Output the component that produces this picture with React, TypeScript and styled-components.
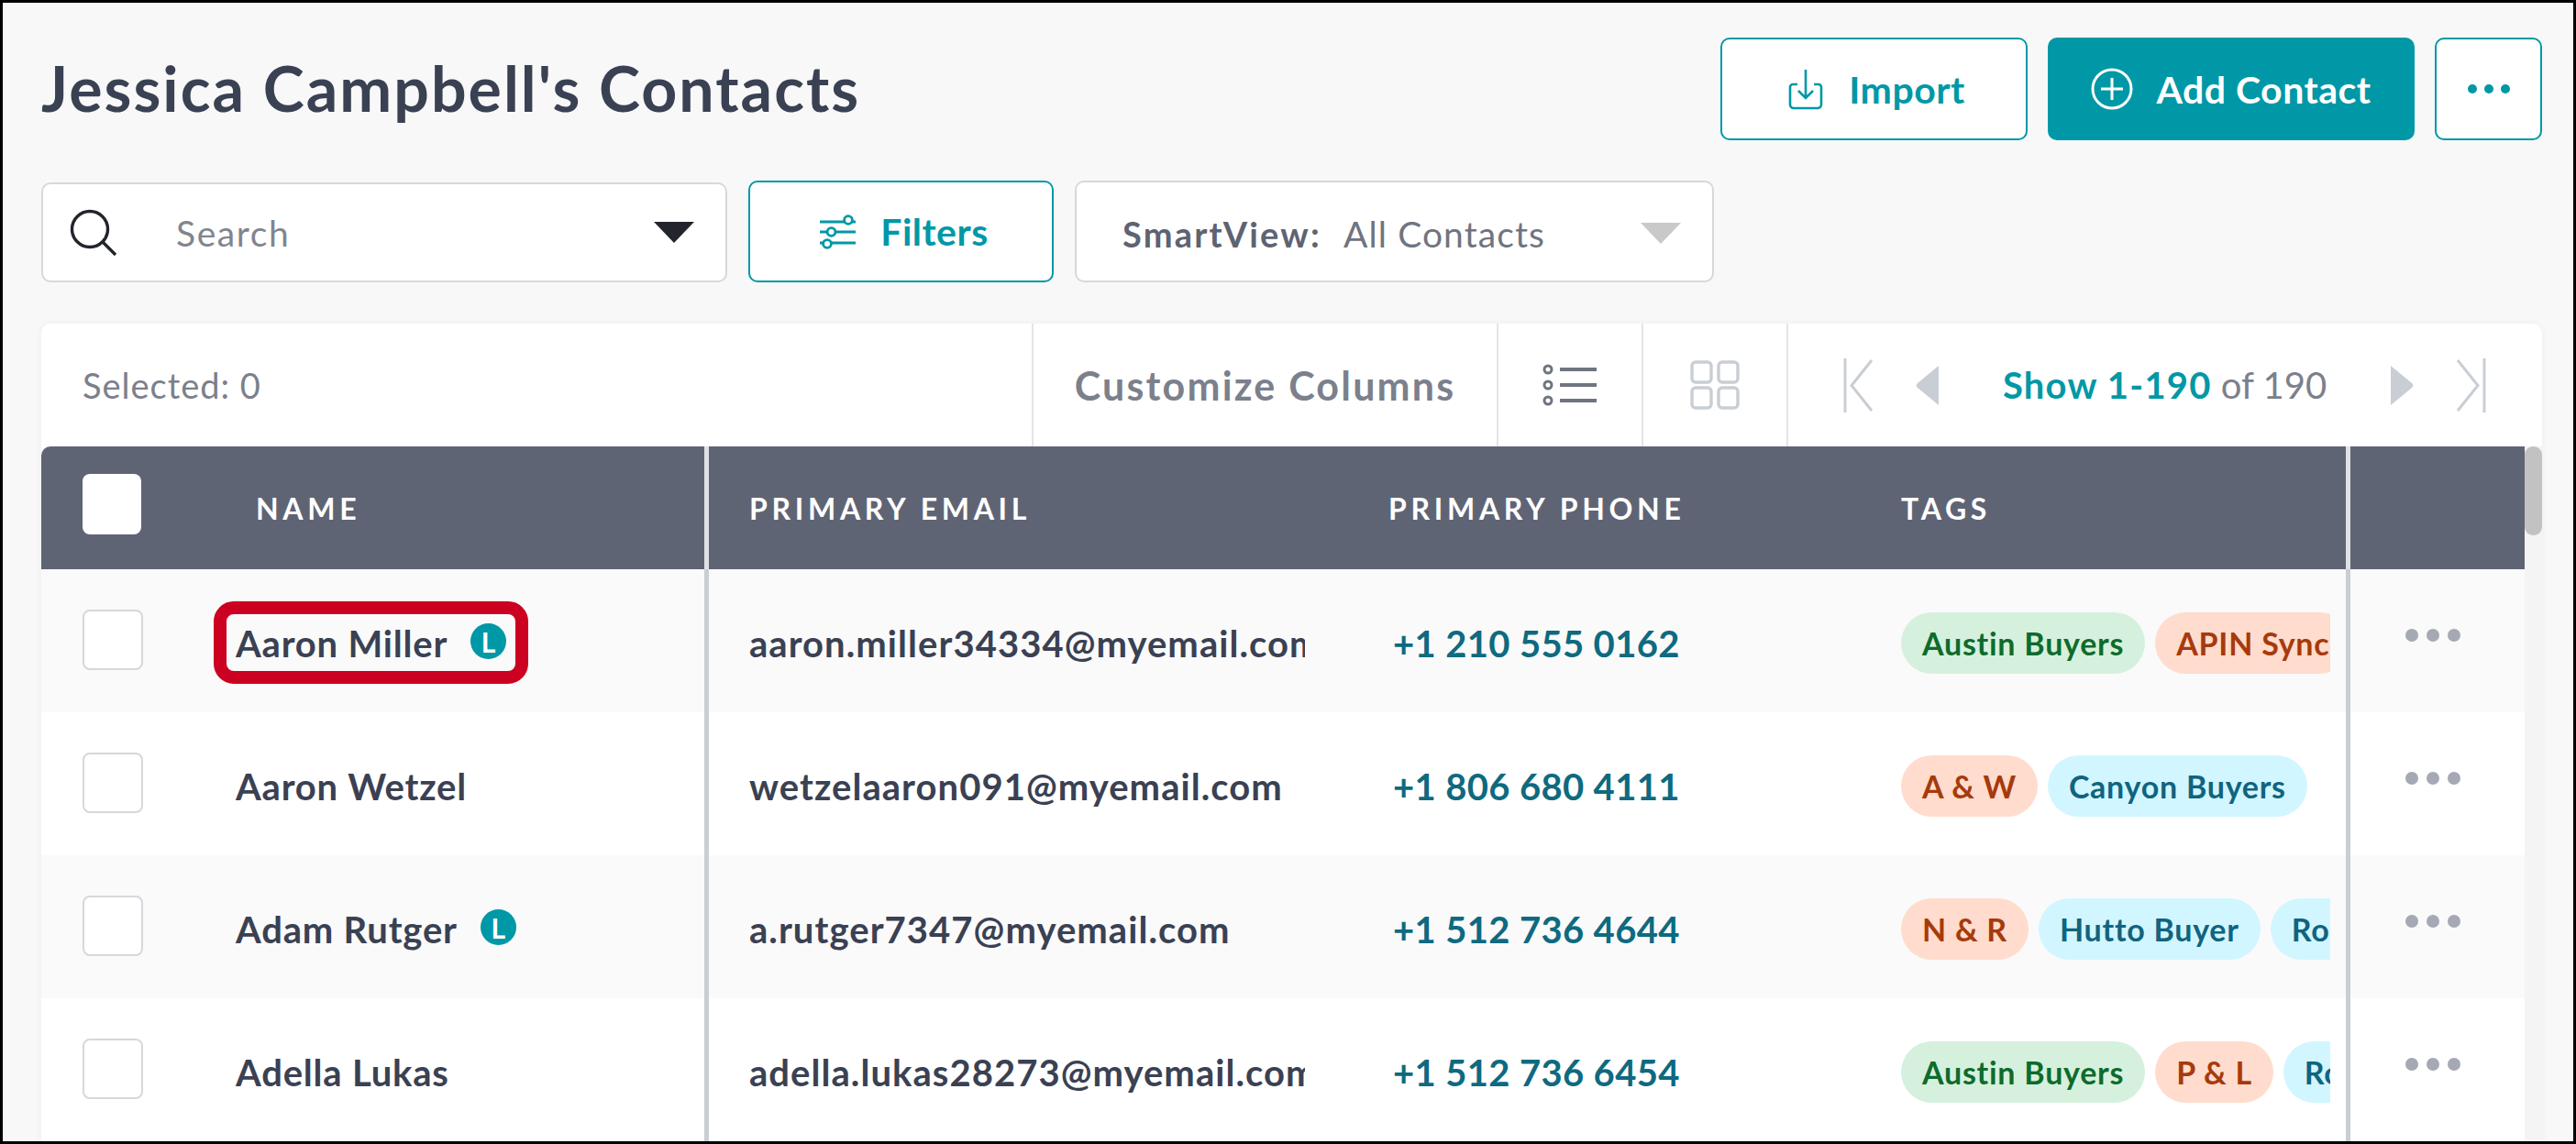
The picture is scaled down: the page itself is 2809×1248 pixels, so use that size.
import React from 'react';
import styled, { createGlobalStyle } from 'styled-components';

const Colors = {
  teal: '#0098a6',
  ink: '#3a4153',
  slate: '#5f6475',
  line: '#c9ced5',
  hair: '#e3e5e8',
  grey: '#7b808c',
};

const GlobalStyle = createGlobalStyle`
  html, body {
    margin: 0;
    padding: 0;
    background: #f8f8f8;
  }
  * {
    box-sizing: border-box;
  }
  body {
    font-family: Lato, "Open Sans", sans-serif;
  }
`;

const Page = styled.div`
  width: 2809px;
  height: 1248px;
  border: 3px solid #000;
  padding: 0 34px 0 42px;
  background: #f8f8f8;
  overflow: hidden;
  display: flex;
  flex-direction: column;
`;

const TopBar = styled.div`
  display: flex;
  align-items: center;
  justify-content: space-between;
  margin-top: 38px;
  height: 112px;
`;

const Title = styled.h1`
  margin: 0 0 4px;
  font-size: 68px;
  font-weight: 700;
  letter-spacing: 2.05px;
  color: ${Colors.ink};
`;

const TopActions = styled.div`
  display: flex;
  gap: 22px;
`;

const OutlineButton = styled.div<{ $width: number; $height?: number; $shift?: number; $gap?: number }>`
  width: ${(p) => p.$width}px;
  height: ${(p) => p.$height || 112}px;
  display: flex;
  align-items: center;
  justify-content: center;
  gap: ${(p) => p.$gap || 28}px;
  padding-left: ${(p) => p.$shift || 0}px;
  background: #fff;
  border: 2px solid ${Colors.teal};
  border-radius: 10px;
  color: ${Colors.teal};
  font-size: 41px;
  font-weight: 700;
  letter-spacing: 0.5px;
`;

const SolidButton = styled(OutlineButton)`
  background: ${Colors.teal};
  color: #fff;
`;

const MoreDots = styled.div`
  display: flex;
  gap: 8px;
`;

const Dot = styled.span<{ $size: number; $color: string }>`
  width: ${(p) => p.$size}px;
  height: ${(p) => p.$size}px;
  border-radius: 50%;
  background: ${(p) => p.$color};
`;

const FilterBar = styled.div`
  display: flex;
  align-items: flex-end;
  gap: 23px;
  margin-top: 44px;
  height: 111px;
`;

const SearchBox = styled.div`
  width: 748px;
  height: 109px;
  display: flex;
  align-items: center;
  padding: 0 34px 0 29px;
  background: #fff;
  border: 2px solid #d5d8dc;
  border-radius: 10px;
`;

const SearchText = styled.span`
  flex: 1;
  margin-left: 64px;
  font-size: 39px;
  letter-spacing: 1.6px;
  color: #80858f;
`;

const Caret = styled.span<{ $color: string }>`
  width: 0;
  height: 0;
  border-left: 22px solid transparent;
  border-right: 22px solid transparent;
  border-top: 23px solid ${(p) => p.$color};
`;

const SmartViewBox = styled.div`
  width: 697px;
  height: 111px;
  display: flex;
  align-items: center;
  padding: 4px 34px 0 50px;
  background: #fff;
  border: 2px solid #d5d8dc;
  border-radius: 10px;
`;

const SmartLabel = styled.span`
  font-size: 38px;
  font-weight: 700;
  letter-spacing: 2.2px;
  color: #5e6373;
`;

const SmartValue = styled.span`
  flex: 1;
  margin-left: 24px;
  font-size: 39px;
  letter-spacing: 1.1px;
  color: #6f7480;
`;

const Card = styled.div`
  flex: 1;
  margin-top: 45px;
  min-height: 0;
  background: #fff;
  border-radius: 10px 10px 0 0;
  box-shadow: 0 0 8px rgba(0, 0, 0, 0.05);
  overflow: hidden;
`;

const Toolbar = styled.div`
  height: 134px;
  display: flex;
  align-items: stretch;
`;

const SelectedCount = styled.div`
  width: 1080px;
  display: flex;
  align-items: center;
  padding-left: 45px;
  font-size: 38px;
  letter-spacing: 1px;
  color: ${Colors.grey};
`;

const ToolCell = styled.div<{ $width: number }>`
  width: ${(p) => p.$width}px;
  display: flex;
  align-items: center;
  justify-content: center;
  border-left: 2px solid ${Colors.hair};
  font-size: 43px;
  font-weight: 700;
  letter-spacing: 2.2px;
  color: ${Colors.grey};
`;

const Pager = styled.div`
  flex: 1;
  display: flex;
  align-items: center;
  gap: 70px;
  padding-left: 60px;
  border-left: 2px solid ${Colors.hair};
`;

const PagerArrows = styled.div`
  display: flex;
  align-items: center;
  gap: 47px;
`;

const PagerText = styled.div`
  width: 353px;
  font-size: 40px;
  color: ${Colors.grey};
  white-space: nowrap;
  strong {
    font-weight: 700;
    letter-spacing: 1.2px;
    color: ${Colors.teal};
  }
`;

const Table = styled.div`
  display: flex;
`;

const TableBody = styled.div`
  width: 2708px;
`;

const Scrollbar = styled.div`
  width: 19px;
  background: #f4f4f4;
`;

const ScrollThumb = styled.div`
  height: 97px;
  border-radius: 9px;
  background: #c2c2c2;
`;

const columns = '212px 516px 741px 559px 490px 190px';

const HeaderRow = styled.div`
  height: 134px;
  display: grid;
  grid-template-columns: ${columns};
  background: ${Colors.slate};
  border-top-left-radius: 10px;
`;

const Row = styled.div<{ $shaded: boolean }>`
  height: 156px;
  display: grid;
  grid-template-columns: ${columns};
  background: ${(p) => (p.$shaded ? '#fafafa' : '#fff')};
`;

const Cell = styled.div<{ $pad?: number; $divider?: string }>`
  display: flex;
  align-items: center;
  min-width: 0;
  padding-left: ${(p) => p.$pad || 0}px;
  border-right: ${(p) => (p.$divider ? `5px solid ${p.$divider}` : 'none')};
`;

const RowCell = styled(Cell)`
  padding-top: 5px;
`;

const HeadLabel = styled.span`
  font-size: 32px;
  font-weight: 700;
  letter-spacing: 4.7px;
  color: #fff;
`;

const CheckBox = styled.span<{ $head?: boolean }>`
  display: block;
  width: ${(p) => (p.$head ? 64 : 66)}px;
  height: 66px;
  margin-top: ${(p) => (p.$head ? -8 : -7)}px;
  background: #fff;
  border: ${(p) => (p.$head ? 'none' : `2px solid #d5d8dc`)};
  border-radius: 8px;
`;

const NameBlock = styled.div`
  position: relative;
  display: flex;
  align-items: center;
  gap: 25px;
`;

const Name = styled.span`
  font-size: 40px;
  font-weight: 700;
  letter-spacing: 0.8px;
  color: ${Colors.ink};
`;

const Highlight = styled.span`
  position: absolute;
  top: -22px;
  bottom: -20px;
  left: -24px;
  right: -24px;
  border: 14px solid #cc0020;
  border-radius: 22px;
`;

const LeadBadge = styled.span`
  width: 39px;
  height: 39px;
  margin-top: -4px;
  display: flex;
  align-items: center;
  justify-content: center;
  border-radius: 50%;
  background: ${Colors.teal};
  color: #fff;
  font-size: 30px;
  font-weight: 700;
`;

const Email = styled.span`
  width: 606px;
  overflow: hidden;
  white-space: nowrap;
  font-size: 40px;
  font-weight: 700;
  letter-spacing: 1.05px;
  color: ${Colors.ink};
`;

const Phone = styled.span`
  font-size: 40px;
  font-weight: 700;
  letter-spacing: 0.35px;
  color: #0e6a80;
`;

const TagList = styled.div`
  width: 468px;
  display: flex;
  gap: 11px;
  overflow: hidden;
`;

type TagKind = 'green' | 'orange' | 'blue';

const tagColors: Record<TagKind, [string, string]> = {
  green: ['#d6f0de', '#0e6b2b'],
  orange: ['#ffdccd', '#a63a0c'],
  blue: ['#d2f6ff', '#0f6480'],
};

const Tag = styled.span<{ $kind: TagKind }>`
  flex: none;
  height: 67px;
  display: flex;
  align-items: center;
  padding: 0 23px;
  border-radius: 34px;
  font-size: 34px;
  font-weight: 700;
  letter-spacing: 0.75px;
  background: ${(p) => tagColors[p.$kind][0]};
  color: ${(p) => tagColors[p.$kind][1]};
`;

const RowMenu = styled.div`
  display: flex;
  gap: 9px;
  margin: -17px 0 0 60px;
`;

const ImportIcon = () => (
  <svg width="38" height="45" viewBox="0 0 38 45" fill="none" stroke={Colors.teal} strokeWidth="2.6">
    <path d="M10 17H5a3 3 0 0 0-3 3v19a4 4 0 0 0 4 4h26a4 4 0 0 0 4-4V20a3 3 0 0 0-3-3h-5" />
    <path d="M19 1v31M11 24l8 8 8-8" />
  </svg>
);

const PlusIcon = () => (
  <svg width="46" height="46" viewBox="0 0 46 46" fill="none" stroke="#fff" strokeWidth="3">
    <circle cx="23" cy="23" r="21" />
    <path d="M23 11v24M11 23h24" />
  </svg>
);

const SearchIcon = () => (
  <svg width="52" height="51" viewBox="0 0 52 51" fill="none" stroke="#22252b" strokeWidth="3.4">
    <circle cx="22" cy="22" r="19.5" />
    <path d="M36 36l14 14" />
  </svg>
);

const FilterIcon = () => (
  <svg width="41" height="38" viewBox="0 0 41 38" fill="none" stroke={Colors.teal} strokeWidth="2.8">
    <path d="M1 8h27M36 8h4M1 19h8M18 19h22M1 31h4M14 31h26" />
    <circle cx="32" cy="6" r="4.4" />
    <circle cx="13.5" cy="19" r="4.4" />
    <circle cx="9" cy="32" r="4.4" />
  </svg>
);

const ListIcon = () => (
  <svg width="60" height="46" viewBox="0 0 60 46" fill="none" stroke="#6f7480" strokeWidth="3">
    <circle cx="6" cy="6" r="4" />
    <circle cx="6" cy="23" r="4" />
    <circle cx="6" cy="40" r="4" />
    <path d="M19 6h40M19 23h40M19 40h40" strokeWidth="4" />
  </svg>
);

const GridIcon = () => (
  <svg width="54" height="54" viewBox="0 0 54 54" fill="none" stroke="#c9ced5" strokeWidth="3.4">
    <rect x="2" y="2" width="21" height="22" rx="4" />
    <rect x="31" y="2" width="21" height="22" rx="4" />
    <rect x="2" y="30" width="21" height="22" rx="4" />
    <rect x="31" y="30" width="21" height="22" rx="4" />
  </svg>
);

const FlipBox = styled.span<{ $flip?: boolean }>`
  display: flex;
  transform: ${(p) => (p.$flip ? 'scaleX(-1)' : 'none')};
`;

const EdgeArrow = ({ flip }: { flip?: boolean }) => (
  <FlipBox $flip={flip}>
    <svg width="32" height="59" viewBox="0 0 32 59" fill="none" stroke="#c9ced5" strokeWidth="3">
      <path d="M2 0v59M31 2L9 29.5 31 57" />
    </svg>
  </FlipBox>
);

const StepArrow = ({ flip }: { flip?: boolean }) => (
  <FlipBox $flip={flip}>
    <svg width="25" height="43" viewBox="0 0 25 43" fill="#c9ced5">
      <path d="M25 0v43L2 24a3 3 0 0 1 0-5z" />
    </svg>
  </FlipBox>
);

interface Contact {
  name: string;
  lead?: boolean;
  marked?: boolean;
  email: string;
  phone: string;
  tags: [string, TagKind][];
}

const contacts: Contact[] = [
  {
    name: 'Aaron Miller',
    lead: true,
    marked: true,
    email: 'aaron.miller34334@myemail.com',
    phone: '+1 210 555 0162',
    tags: [
      ['Austin Buyers', 'green'],
      ['APIN Sync', 'orange'],
    ],
  },
  {
    name: 'Aaron Wetzel',
    email: 'wetzelaaron091@myemail.com',
    phone: '+1 806 680 4111',
    tags: [
      ['A & W', 'orange'],
      ['Canyon Buyers', 'blue'],
    ],
  },
  {
    name: 'Adam Rutger',
    lead: true,
    email: 'a.rutger7347@myemail.com',
    phone: '+1 512 736 4644',
    tags: [
      ['N & R', 'orange'],
      ['Hutto Buyer', 'blue'],
      ['Round Rock', 'blue'],
    ],
  },
  {
    name: 'Adella Lukas',
    email: 'adella.lukas28273@myemail.com',
    phone: '+1 512 736 6454',
    tags: [
      ['Austin Buyers', 'green'],
      ['P & L', 'orange'],
      ['Round Rock', 'blue'],
    ],
  },
];

const App = () => (
  <>
    <GlobalStyle />
    <Page>
      <TopBar>
        <Title>Jessica Campbell's Contacts</Title>
        <TopActions>
          <OutlineButton $width={335} $shift={6}>
            <ImportIcon />
            Import
          </OutlineButton>
          <SolidButton $width={400} $gap={25}>
            <PlusIcon />
            Add Contact
          </SolidButton>
          <OutlineButton $width={117}>
            <MoreDots>
              <Dot $size={10} $color={Colors.teal} />
              <Dot $size={10} $color={Colors.teal} />
              <Dot $size={10} $color={Colors.teal} />
            </MoreDots>
          </OutlineButton>
        </TopActions>
      </TopBar>

      <FilterBar>
        <SearchBox>
          <SearchIcon />
          <SearchText>Search</SearchText>
          <Caret $color="#22252b" />
        </SearchBox>
        <OutlineButton $width={333} $height={111} $shift={6} $gap={26}>
          <FilterIcon />
          Filters
        </OutlineButton>
        <SmartViewBox>
          <SmartLabel>SmartView:</SmartLabel>
          <SmartValue>All Contacts</SmartValue>
          <Caret $color="#c9c9c9" />
        </SmartViewBox>
      </FilterBar>

      <Card>
        <Toolbar>
          <SelectedCount>Selected: 0</SelectedCount>
          <ToolCell $width={507}>Customize Columns</ToolCell>
          <ToolCell $width={158}>
            <ListIcon />
          </ToolCell>
          <ToolCell $width={158}>
            <GridIcon />
          </ToolCell>
          <Pager>
            <PagerArrows>
              <EdgeArrow />
              <StepArrow />
            </PagerArrows>
            <PagerText>
              <strong>Show 1-190</strong> of 190
            </PagerText>
            <PagerArrows>
              <StepArrow flip />
              <EdgeArrow flip />
            </PagerArrows>
          </Pager>
        </Toolbar>

        <Table>
          <TableBody>
            <HeaderRow>
              <Cell $pad={45}>
                <CheckBox $head />
              </Cell>
              <Cell $pad={22} $divider="#dfe2e6">
                <HeadLabel>NAME</HeadLabel>
              </Cell>
              <Cell $pad={44}>
                <HeadLabel>PRIMARY EMAIL</HeadLabel>
              </Cell>
              <Cell>
                <HeadLabel>PRIMARY PHONE</HeadLabel>
              </Cell>
              <Cell $divider="#dfe2e6">
                <HeadLabel>TAGS</HeadLabel>
              </Cell>
              <Cell />
            </HeaderRow>
            {contacts.map((contact, index) => (
              <Row key={contact.email} $shaded={index % 2 === 0}>
                <RowCell $pad={45}>
                  <CheckBox />
                </RowCell>
                <RowCell $divider={Colors.line}>
                  <NameBlock>
                    <Name>{contact.name}</Name>
                    {contact.lead && <LeadBadge>L</LeadBadge>}
                    {contact.marked && <Highlight />}
                  </NameBlock>
                </RowCell>
                <RowCell $pad={44}>
                  <Email>{contact.email}</Email>
                </RowCell>
                <RowCell $pad={5}>
                  <Phone>{contact.phone}</Phone>
                </RowCell>
                <RowCell $divider={Colors.line}>
                  <TagList>
                    {contact.tags.map(([label, kind]) => (
                      <Tag key={label} $kind={kind}>
                        {label}
                      </Tag>
                    ))}
                  </TagList>
                </RowCell>
                <RowCell>
                  <RowMenu>
                    <Dot $size={14} $color="#a5a9b3" />
                    <Dot $size={14} $color="#a5a9b3" />
                    <Dot $size={14} $color="#a5a9b3" />
                  </RowMenu>
                </RowCell>
              </Row>
            ))}
          </TableBody>
          <Scrollbar>
            <ScrollThumb />
          </Scrollbar>
        </Table>
      </Card>
    </Page>
  </>
);

export default App;
